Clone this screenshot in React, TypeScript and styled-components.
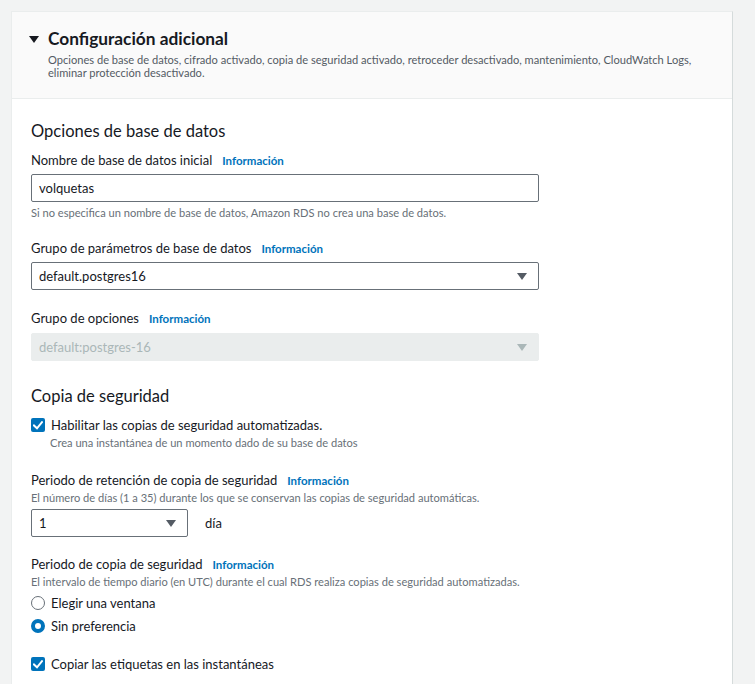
import React from "react";
import styled, { createGlobalStyle } from "styled-components";

const GlobalStyle = createGlobalStyle`
  html, body { margin: 0; padding: 0; }
  body {
    background: #f2f3f3;
    font-family: Lato, "Liberation Sans", sans-serif;
    color: #16191f;
    -webkit-font-smoothing: antialiased;
  }
  * { box-sizing: border-box; }
`;

const Page = styled.div`
  padding: 11px 22px 0 11px;
  height: 684px;
  overflow: hidden;
`;

const Panel = styled.section`
  background: #ffffff;
  border: 1px solid #eaeded;
  border-right-color: #d5dbdb;
  min-height: 700px;
`;

const Header = styled.header`
  display: grid;
  grid-template-columns: 19px 1fr;
  background: #fafafa;
  border-bottom: 1px solid #eaeded;
  padding: 16px 19px 19px 17px;
`;

const Caret = styled.span`
  display: flex;
  align-items: center;
  height: 22px;
`;

const HeaderTitle = styled.h2`
  margin: 0;
  font-size: 17.3px;
  line-height: 22px;
  font-weight: 700;
  color: #16191f;
`;

const HeaderDesc = styled.p`
  grid-column: 2;
  margin: 3px 0 0;
  font-size: 11.1px;
  line-height: 13px;
  color: #545b64;
`;

const Body = styled.div`
  padding: 20px 19px 20px;
`;

const SectionTitle = styled.h3<{ $mt?: number }>`
  margin: ${(p) => p.$mt ?? 0}px 0 0;
  font-size: 16.5px;
  line-height: 24px;
  font-weight: 400;
  color: #16191f;
`;

const Field = styled.div<{ $mt: number }>`
  margin-top: ${(p) => p.$mt}px;
  display: flex;
  flex-direction: column;
`;

const LabelRow = styled.div`
  display: flex;
  align-items: baseline;
  gap: 10px;
  height: 20px;
  font-size: 13px;
  line-height: 20px;
  color: #16191f;
`;

const InfoLink = styled.a`
  font-size: 11.5px;
  line-height: 20px;
  font-weight: 700;
  color: #0073bb;
  text-decoration: none;
  cursor: pointer;
`;

const Hint = styled.div<{ $mt?: number; $indent?: number }>`
  margin-top: ${(p) => p.$mt ?? 0}px;
  padding-left: ${(p) => p.$indent ?? 0}px;
  font-size: 11.1px;
  line-height: 16px;
  color: #687078;
`;

const TextInput = styled.div<{ $mt?: number }>`
  margin-top: ${(p) => p.$mt ?? 4}px;
  width: 508px;
  height: 28px;
  border: 1px solid #687078;
  border-radius: 2px;
  display: flex;
  align-items: center;
  padding: 0 7px;
  font-size: 13px;
  color: #16191f;
`;

const SelectBox = styled.div<{ $mt?: number; $width?: number; $disabled?: boolean }>`
  margin-top: ${(p) => p.$mt ?? 4}px;
  width: ${(p) => p.$width ?? 508}px;
  height: 28px;
  border: 1px solid ${(p) => (p.$disabled ? "#eaeded" : "#687078")};
  background: ${(p) => (p.$disabled ? "#eaeded" : "#ffffff")};
  border-radius: 2px;
  display: flex;
  align-items: center;
  justify-content: space-between;
  padding: 0 11px 0 7px;
  font-size: 13px;
  color: ${(p) => (p.$disabled ? "#aab7b8" : "#16191f")};
`;

const InlineRow = styled.div`
  margin-top: 3px;
  display: flex;
  align-items: center;
  gap: 17px;
`;

const UnitText = styled.span`
  font-size: 13px;
  color: #16191f;
`;

const ChoiceRow = styled.label<{ $mt?: number }>`
  margin-top: ${(p) => p.$mt ?? 0}px;
  display: flex;
  align-items: center;
  gap: 6px;
  height: 20px;
  font-size: 13px;
  line-height: 20px;
  color: #16191f;
`;

const CheckBoxMark = styled.span`
  width: 14px;
  height: 14px;
  border-radius: 2px;
  background: #0073bb;
  display: flex;
  align-items: center;
  justify-content: center;
  flex: none;
`;

const RadioMark = styled.span<{ $checked?: boolean }>`
  width: 14px;
  height: 14px;
  border-radius: 50%;
  flex: none;
  border: ${(p) => (p.$checked ? "4px solid #0073bb" : "1px solid #687078")};
  background: #ffffff;
`;

const Arrow = ({ color }: { color: string }) => (
  <svg width="10" height="7" viewBox="0 0 10 7">
    <path d="M0 0 H10 L5 7 Z" fill={color} />
  </svg>
);

const Check = () => (
  <svg width="10" height="9" viewBox="0 0 10 9">
    <path d="M1 4.5 L4 7.3 L9 1.2" fill="none" stroke="#fff" strokeWidth="2" strokeLinecap="square" />
  </svg>
);

const Label = ({ text, info = true }: { text: string; info?: boolean }) => (
  <LabelRow>
    <span>{text}</span>
    {info && <InfoLink>Información</InfoLink>}
  </LabelRow>
);

export default function App() {
  return (
    <>
      <GlobalStyle />
      <Page>
        <Panel>
          <Header>
            <Caret>
              <svg width="10" height="7" viewBox="0 0 10 7">
                <path d="M0 0 H10 L5 7 Z" fill="#16191f" />
              </svg>
            </Caret>
            <HeaderTitle>Configuración adicional</HeaderTitle>
            <HeaderDesc>
              Opciones de base de datos, cifrado activado, copia de seguridad activado, retroceder desactivado, mantenimiento, CloudWatch Logs, eliminar protección desactivado.
            </HeaderDesc>
          </Header>
          <Body>
            <SectionTitle>Opciones de base de datos</SectionTitle>

            <Field $mt={7}>
              <Label text="Nombre de base de datos inicial" />
              <TextInput>volquetas</TextInput>
              <Hint $mt={3}>Si no especifica un nombre de base de datos, Amazon RDS no crea una base de datos.</Hint>
            </Field>

            <Field $mt={17}>
              <Label text="Grupo de parámetros de base de datos" />
              <SelectBox>
                <span>default.postgres16</span>
                <Arrow color="#545b64" />
              </SelectBox>
            </Field>

            <Field $mt={18}>
              <Label text="Grupo de opciones" />
              <SelectBox $disabled $mt={5}>
                <span>default:postgres-16</span>
                <Arrow color="#aab7b8" />
              </SelectBox>
            </Field>

            <SectionTitle $mt={23}>Copia de seguridad</SectionTitle>

            <Field $mt={7}>
              <ChoiceRow>
                <CheckBoxMark>
                  <Check />
                </CheckBoxMark>
                <span>Habilitar las copias de seguridad automatizadas.</span>
              </ChoiceRow>
              <Hint $indent={19}>Crea una instantánea de un momento dado de su base de datos</Hint>
            </Field>

            <Field $mt={19}>
              <Label text="Periodo de retención de copia de seguridad" />
              <Hint>El número de días (1 a 35) durante los que se conservan las copias de seguridad automáticas.</Hint>
              <InlineRow>
                <SelectBox $mt={0} $width={157}>
                  <span>1</span>
                  <Arrow color="#545b64" />
                </SelectBox>
                <UnitText>día</UnitText>
              </InlineRow>
            </Field>

            <Field $mt={17}>
              <Label text="Periodo de copia de seguridad" />
              <Hint>El intervalo de tiempo diario (en UTC) durante el cual RDS realiza copias de seguridad automatizadas.</Hint>
              <ChoiceRow $mt={3}>
                <RadioMark />
                <span>Elegir una ventana</span>
              </ChoiceRow>
              <ChoiceRow $mt={3}>
                <RadioMark $checked />
                <span>Sin preferencia</span>
              </ChoiceRow>
            </Field>

            <Field $mt={18}>
              <ChoiceRow>
                <CheckBoxMark>
                  <Check />
                </CheckBoxMark>
                <span>Copiar las etiquetas en las instantáneas</span>
              </ChoiceRow>
            </Field>
          </Body>
        </Panel>
      </Page>
    </>
  );
}
